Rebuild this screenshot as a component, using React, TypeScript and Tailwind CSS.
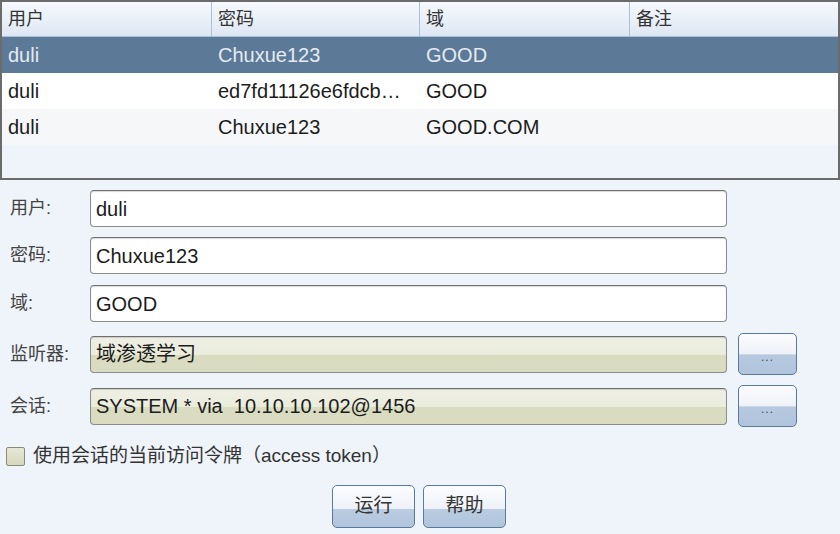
import React from "react";

const font = { fontFamily: '"Liberation Sans", "Noto Sans CJK SC", sans-serif' };

function Field({ label, value, olive, button, extraTop }: { label: string; value: string; olive?: boolean; button?: boolean; extraTop?: number }) {
  return (
    <div className="flex items-center h-[37px]" style={{ height: button ? 42 : 37, marginTop: extraTop }}>
      <div className="w-[90px] pl-[10px] text-[18px] text-[#444]">{label}</div>
      <div
        className={
          "w-[637px] h-[37px] rounded-[4px] border border-[#8c8c8c] border-t-[#6f6f6f] flex items-center pl-[5px] text-[20px] text-[#1c1c1c] shadow-[inset_0_1px_1px_rgba(0,0,0,0.15)] " +
          (olive ? "bg-[linear-gradient(#eff0e4_0%,#eaecdc_50%,#d9dcc1_52%,#d9dcc1_100%)]" : "bg-white")
        }
      >
        <span className="whitespace-pre">{value}</span>
      </div>
      {button && (
        <div className="ml-[11px] w-[59px] h-[42px] rounded-[5px] border border-[#5a7a9c] bg-[linear-gradient(#fbfcfe_0%,#eef2f8_50%,#b6c9df_52%,#b0c4dc_100%)] flex items-end justify-center pb-[8px] text-[12px] text-[#445] tracking-[1px]">
          ...
        </div>
      )}
    </div>
  );
}

function Btn({ label }: { label: string }) {
  return (
    <div className="w-[83px] h-[43px] rounded-[5px] border border-[#5a7a9c] bg-[linear-gradient(#fbfcfe_0%,#eef2f8_55%,#b9cce1_57%,#b0c4dc_100%)] flex items-center justify-center text-[19px] text-[#333]">
      {label}
    </div>
  );
}

export default function App() {
  const rows = [
    ["duli", "Chuxue123", "GOOD", ""],
    ["duli", "ed7fd11126e6fdcb…", "GOOD", ""],
    ["duli", "Chuxue123", "GOOD.COM", ""],
  ];
  const widths = [210, 208, 210, 206];
  return (
    <div className="w-[840px] h-[534px] bg-[#eff3fa] overflow-hidden" style={font}>
      <div className="h-[180px] border-2 border-[#6b6b6b] bg-[#eff3fa] flex flex-col">
        <div className="h-[35px] flex border-b border-[#a9c0d9] bg-[linear-gradient(#f6f9fd,#dde7f3)]">
          {["用户", "密码", "域", "备注"].map((h, i) => (
            <div
              key={h}
              className={"flex items-center pl-[6px] pt-[1px] text-[18px] text-[#333] " + (i < 3 ? "border-r border-[#a9c0d9]" : "flex-1")}
              style={i < 3 ? { width: widths[i] } : undefined}
            >
              {h}
            </div>
          ))}
        </div>
        {rows.map((r, ri) => (
          <div
            key={ri}
            className={
              "h-[36px] flex items-center text-[20px] " +
              (ri === 0 ? "bg-[#5c7997] text-[#e4ebf2]" : ri === 1 ? "bg-white text-[#1c1c1c]" : "bg-[#f6f7f9] text-[#1c1c1c]")
            }
          >
            {r.map((c, ci) => (
              <div key={ci} className="pl-[6px] whitespace-nowrap overflow-hidden" style={{ width: widths[ci] }}>
                {c}
              </div>
            ))}
          </div>
        ))}
      </div>
      <div className="flex flex-col gap-[10px] pt-[10px]">
        <Field label="用户:" value="duli" />
        <Field label="密码:" value="Chuxue123" />
        <Field label="域:" value="GOOD" extraTop={1} />
        <Field label="监听器:" value="域渗透学习" olive button extraTop={1} />
        <Field label="会话:" value="SYSTEM * via  10.10.10.102@1456" olive button />
      </div>
      <div className="flex items-center mt-[19px] pl-[6px] h-[21px]">
        <div className="w-[19px] h-[19px] border border-[#8a8a7a] rounded-[2px] bg-[linear-gradient(#e6e8d4,#d6d9bc)]" />
        <span className="ml-[8px] text-[19px] text-[#333]">使用会话的当前访问令牌（access token）</span>
      </div>
      <div className="flex justify-center gap-[8px] mt-[18px] pr-[2px]">
        <Btn label="运行" />
        <Btn label="帮助" />
      </div>
    </div>
  );
}
